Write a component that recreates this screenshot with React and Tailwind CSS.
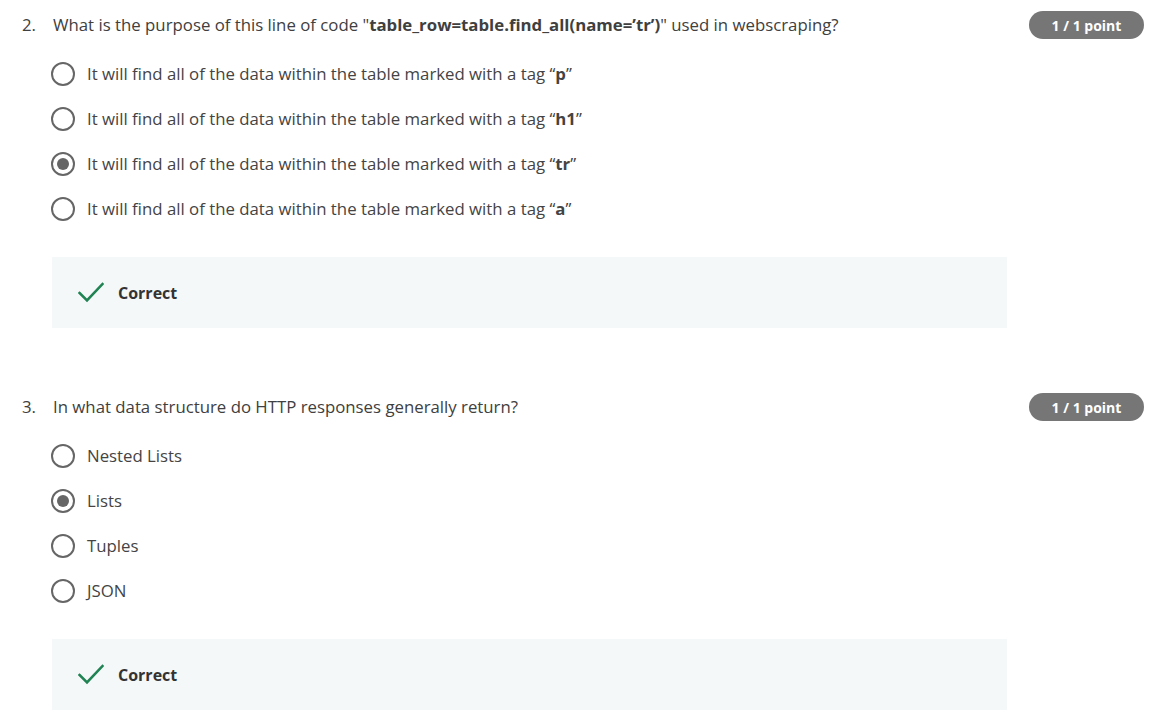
const questions = [
  {
    num: "2.",
    text: (
      <>
        What is the purpose of this line of code "<b className="font-bold">table_row=table.find_all(name=’tr’)</b>" used in webscraping?
      </>
    ),
    options: [
      { label: <>It will find all of the data within the table marked with a tag “<b className="font-bold">p</b>”</> },
      { label: <>It will find all of the data within the table marked with a tag “<b className="font-bold">h1</b>”</> },
      { label: <>It will find all of the data within the table marked with a tag “<b className="font-bold">tr</b>”</>, checked: true },
      { label: <>It will find all of the data within the table marked with a tag “<b className="font-bold">a</b>”</> },
    ],
  },
  {
    num: "3.",
    text: "In what data structure do HTTP responses generally return?",
    options: [
      { label: "Nested Lists" },
      { label: "Lists", checked: true },
      { label: "Tuples" },
      { label: "JSON" },
    ],
  },
];

const Radio = ({ checked }) => (
  <span className="flex h-6 w-6 shrink-0 items-center justify-center rounded-full border-[2.5px] border-[#666]">
    {checked && <span className="h-3 w-3 rounded-full bg-[#666]" />}
  </span>
);

const Question = ({ q, first }) => (
  <div className={first ? "" : "mt-[65px]"}>
    <div className="flex h-7 items-center justify-between">
      <div className="flex text-[16.8px] leading-6 text-[#404040]">
        <span className="w-[31px]">{q.num}</span>
        <span>{q.text}</span>
      </div>
      <span className="flex h-7 w-[115px] items-center justify-center rounded-full bg-[#767676] text-[14px] font-bold text-white">
        1 / 1 point
      </span>
    </div>

    <div className="mt-[12px] pl-[29px]">
      {q.options.map((opt, i) => (
        <div key={i} className="flex h-[45px] items-center gap-3 text-[16.8px] text-[#444]">
          <Radio checked={opt.checked} />
          <span>{opt.label}</span>
        </div>
      ))}
    </div>

    <div className="ml-[30px] mt-[26px] flex h-[71px] w-[955px] items-center bg-[#f5f8f8] pl-[26px]">
      <svg width="26" height="21" viewBox="0 0 26 21" fill="none">
        <path d="M1.5 11 L9 18.5 L24.5 2" stroke="#1f8354" strokeWidth="2.6" strokeLinecap="square" />
      </svg>
      <span className="ml-[14px] text-[16px] font-bold text-[#333]">Correct</span>
    </div>
  </div>
);

export default function App() {
  return (
    <div
      className="min-h-screen bg-white pl-[22px] pr-3 pt-[11px]"
      style={{ fontFamily: '"Open Sans", "Noto Sans", sans-serif' }}
    >
      {questions.map((q, i) => (
        <Question key={i} q={q} first={i === 0} />
      ))}
    </div>
  );
}
